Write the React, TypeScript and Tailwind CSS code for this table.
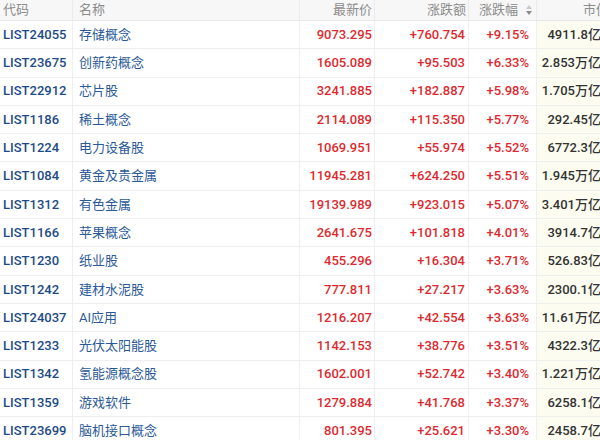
const rows = [
  ["LIST24055", "存储概念", "9073.295", "+760.754", "+9.15%", "4911.8亿"],
  ["LIST23675", "创新药概念", "1605.089", "+95.503", "+6.33%", "2.853万亿"],
  ["LIST22912", "芯片股", "3241.885", "+182.887", "+5.98%", "1.705万亿"],
  ["LIST1186", "稀土概念", "2114.089", "+115.350", "+5.77%", "292.45亿"],
  ["LIST1224", "电力设备股", "1069.951", "+55.974", "+5.52%", "6772.3亿"],
  ["LIST1084", "黄金及贵金属", "11945.281", "+624.250", "+5.51%", "1.945万亿"],
  ["LIST1312", "有色金属", "19139.989", "+923.015", "+5.07%", "3.401万亿"],
  ["LIST1166", "苹果概念", "2641.675", "+101.818", "+4.01%", "3914.7亿"],
  ["LIST1230", "纸业股", "455.296", "+16.304", "+3.71%", "526.83亿"],
  ["LIST1242", "建材水泥股", "777.811", "+27.217", "+3.63%", "2300.1亿"],
  ["LIST24037", "AI应用", "1216.207", "+42.554", "+3.63%", "11.61万亿"],
  ["LIST1233", "光伏太阳能股", "1142.153", "+38.776", "+3.51%", "4322.3亿"],
  ["LIST1342", "氢能源概念股", "1602.001", "+52.742", "+3.40%", "1.221万亿"],
  ["LIST1359", "游戏软件", "1279.884", "+41.768", "+3.37%", "6258.1亿"],
  ["LIST23699", "脑机接口概念", "801.395", "+25.621", "+3.30%", "2458.7亿"],
];

function SortIcon() {
  return (
    <svg width="8" height="12" viewBox="0 0 8 12" className="ml-auto mr-[3px]">
      <path d="M4 1 L7 5 L1 5 Z" fill="#c8c8c8" />
      <path d="M4 11 L7 7 L1 7 Z" fill="#8a8a8a" />
    </svg>
  );
}

export default function App() {
  return (
    <div
      className="w-[600px] h-[440px] overflow-hidden bg-white text-[13px]"
      style={{ fontFamily: 'Roboto, "Noto Sans CJK SC", sans-serif' }}
    >
      <div className="w-[612px]">
        <div className="flex h-[21px] items-center border-b border-[#e8e8e8] bg-[#f7f7f7] text-[#8c8c8c]">
          <div className="w-[73px] h-full flex items-center pl-[3px] border-r border-[#ebebeb]">代码</div>
          <div className="w-[227px] h-full flex items-center pl-[6px] border-r border-[#ebebeb]">名称</div>
          <div className="w-[75px] h-full flex items-center justify-end pr-[2px] border-r border-[#ebebeb]">最新价</div>
          <div className="w-[94px] h-full flex items-center justify-end pr-[2px] border-r border-[#ebebeb]">涨跌额</div>
          <div className="w-[68px] h-full flex items-center pl-[10px] border-r border-[#ebebeb]">
            涨跌幅
            <SortIcon />
          </div>
          <div className="w-[75px] h-full flex items-center pl-[46px]">市值</div>
        </div>
        {rows.map((r) => (
          <div key={r[0]} className="flex h-[28.3px] items-center border-b border-[#efefef] font-medium">
            <div className="w-[73px] h-full flex items-center pl-[3px] border-r border-[#efefef] text-[#1d4b86]">{r[0]}</div>
            <div className="w-[227px] h-full flex items-center pl-[6px] border-r border-[#efefef] text-[#2b5a97] font-normal">{r[1]}</div>
            <div className="w-[75px] h-full flex items-center justify-end pr-[2px] border-r border-[#efefef] text-[#dd2a2f]">{r[2]}</div>
            <div className="w-[94px] h-full flex items-center justify-end pr-[3px] border-r border-[#efefef] text-[#dd2a2f]">{r[3]}</div>
            <div className="w-[68px] h-full flex items-center justify-end pr-[7px] border-r border-[#efefef] text-[#dd2a2f]">{r[4]}</div>
            <div className="w-[75px] h-full flex items-center justify-end pr-[11px] bg-[#fcfcf0] text-[#333333]">{r[5]}</div>
          </div>
        ))}
      </div>
    </div>
  );
}
